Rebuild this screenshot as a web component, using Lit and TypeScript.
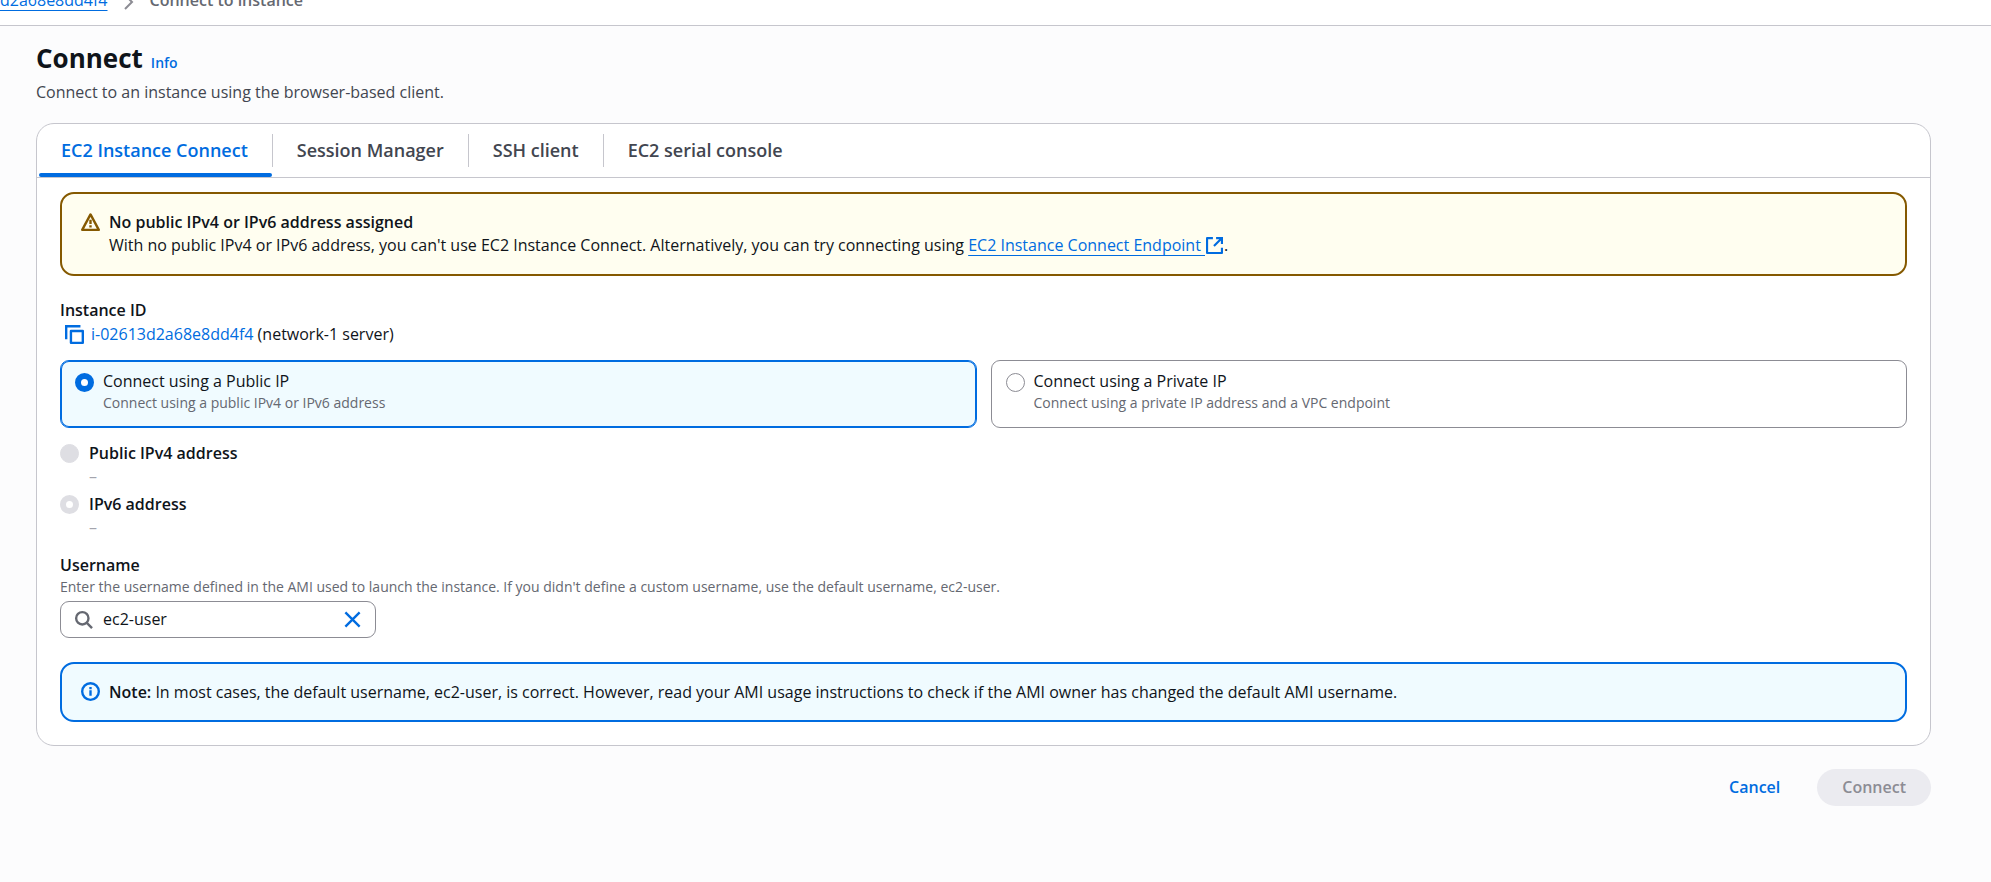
import { LitElement, html, css, svg } from "lit";
import { customElement, state } from "lit/decorators.js";
import { classMap } from "lit/directives/class-map.js";

const TABS = ["EC2 Instance Connect", "Session Manager", "SSH client", "EC2 serial console"];

const ICONS = {
  chevron: svg`<path d="M4 1l7 7-7 7" />`,
  warning: svg`<path d="M8 1.2 15 14.2H1z" stroke-linejoin="round" /><path d="M8 5.6v3.6M8 10.4v1.9" />`,
  info: svg`<circle cx="8" cy="8" r="7" /><path d="M8 11.6V7M8 6V4.2" />`,
  copy: svg`<path d="M1 12V1h12" /><path d="M5 5h10v10H5z" stroke-linejoin="round" />`,
  external: svg`<path d="M6.5 1H1v14h14V10" stroke-linejoin="round" /><path d="M9.5 1H15v5.5M15 1 7.5 8.5" />`,
  search: svg`<circle cx="7" cy="7" r="5.2" /><path d="m11 11 4.2 4.2" />`,
  close: svg`<path d="m2 2 12 12M14 2 2 14" />`,
};

const icon = (name: keyof typeof ICONS) =>
  html`<svg class="icon icon-${name}" viewBox="0 0 16 16" aria-hidden="true">${ICONS[name]}</svg>`;

@customElement("app-root")
export class AppRoot extends LitElement {
  @state() private tab = 0;
  @state() private ipMode = "public";
  @state() private username = "ec2-user";

  static styles = css`
    :host {
      display: block;
      min-height: 100vh;
      background: #fcfcfd;
      color: #0f141a;
      font: 16px/23px "Open Sans", "Noto Sans", sans-serif;
    }
    * { box-sizing: border-box; }
    button, input { font: inherit; color: inherit; margin: 0; }
    button { border: 0; background: none; padding: 0; cursor: pointer; }
    a { color: #006ce0; }
    h1, p { margin: 0; }
    strong { font-weight: 600; }
    .icon {
      width: 19px;
      height: 19px;
      fill: none;
      stroke: currentColor;
      stroke-width: 2;
      flex: none;
    }
    .header {
      height: 26px;
      overflow: hidden;
      display: flex;
      align-items: flex-end;
      background: #fff;
      border-bottom: 1px solid #c6c6cd;
    }
    .crumbs {
      display: flex;
      align-items: center;
      gap: 13px;
      padding-bottom: 13px;
      color: #656871;
    }
    .crumbs a { text-decoration: underline; text-underline-offset: 4px; }
    .crumbs .icon { width: 16px; height: 16px; color: #8c8c94; margin-top: 2px; }
    main { padding: 15px 60px 24px 36px; }
    .title { display: flex; align-items: baseline; gap: 8px; }
    h1 { font-size: 26px; line-height: 34px; font-weight: 700; }
    .info { font-size: 14px; font-weight: 600; text-decoration: none; }
    .lead { margin-top: 6px; color: #424650; }
    .card {
      margin-top: 19px;
      background: #fff;
      border: 1px solid #c6c6cd;
      border-radius: 18px;
    }
    .tabs {
      display: flex;
      padding: 0 2px;
      border-bottom: 1px solid #c6c6cd;
    }
    .tab {
      display: flex;
      flex-direction: column;
      font-size: 18px;
      font-weight: 600;
      color: #424650;
    }
    .tab-label {
      margin: 10px 0 6px;
      padding: 5px 24px;
      border-right: 1px solid #c6c6cd;
    }
    .tab:first-child .tab-label { padding-left: 22px; }
    .tab:last-child .tab-label { border-right: 0; }
    .tab-bar { align-self: stretch; height: 4px; margin-right: 1px; border-radius: 2px; }
    .tab.active { color: #006ce0; }
    .tab.active .tab-bar { background: #006ce0; }
    .panel { padding: 14px 23px 23px; }
    .alert {
      display: flex;
      gap: 9px;
      padding: 17px 19px;
      border: 2px solid;
      border-radius: 14px;
    }
    .alert .icon { margin-top: 2px; }
    .alert p { color: #0f141a; }
    .alert.warning { border-color: #855900; background: #fffef0; color: #855900; }
    .alert.note { border-color: #006ce0; background: #f0fbff; color: #006ce0; line-height: 22px; }
    .alert.note .icon { margin-top: 1px; }
    .alert a { text-underline-offset: 4px; }
    .alert .icon-external { width: 17px; height: 17px; margin: 0 1px; vertical-align: -3px; }
    .label { font-weight: 600; }
    .instance { margin-top: 23px; }
    .instance-row { display: flex; align-items: center; gap: 7px; padding-left: 5px; line-height: 25px; }
    .instance-row button { display: flex; color: #006ce0; }
    .instance-row a { text-decoration: none; }
    .tiles { display: grid; grid-template-columns: 1fr 1fr; gap: 14px; margin-top: 13px; }
    .tile {
      display: flex;
      gap: 9px;
      padding: 9px 14px 14px;
      border: 1px solid #8c8c94;
      border-radius: 9px;
      cursor: pointer;
    }
    .tile.selected {
      border-color: #006ce0;
      background: #f0fbff;
      box-shadow: inset 0 0 0 1px #006ce0;
    }
    .choice-text { display: flex; flex-direction: column; }
    .hint { font-size: 14px; line-height: 20px; color: #656871; }
    input[type="radio"] {
      appearance: none;
      flex: none;
      width: 19px;
      height: 19px;
      margin: 3px 0 0;
      border: 1px solid #8c8c94;
      border-radius: 50%;
      background: #fff;
    }
    input[type="radio"]:checked { border: 6px solid #006ce0; }
    input[type="radio"]:disabled { border-color: #dedee3; margin-top: 2px; }
    input[type="radio"]:disabled:not(:checked) { background: #dedee3; }
    .addresses { display: flex; flex-direction: column; gap: 5px; margin-top: 14px; }
    .address { display: flex; gap: 10px; }
    .empty { color: #a4a4ad; }
    .username { margin-top: 15px; display: flex; flex-direction: column; align-items: flex-start; }
    .field {
      display: flex;
      align-items: center;
      gap: 10px;
      width: 316px;
      max-width: 100%;
      height: 37px;
      margin-top: 4px;
      padding: 0 13px;
      border: 1px solid #8c8c94;
      border-radius: 9px;
      background: #fff;
    }
    .field input { flex: 1; min-width: 0; border: 0; padding: 0; outline: 0; background: none; }
    .field button { display: flex; color: #006ce0; }
    .field .icon-search { color: #656871; }
    .note { margin-top: 24px; }
    .actions { display: flex; justify-content: flex-end; gap: 12px; margin-top: 23px; }
    .action {
      height: 37px;
      padding: 0 25px;
      border-radius: 19px;
      font-weight: 600;
      color: #006ce0;
    }
    .action:disabled { background: #ebebf0; color: #8c8c94; cursor: default; }
  `;

  private tile(value: string, label: string, hint: string) {
    const selected = this.ipMode === value;
    return html`
      <label class=${classMap({ tile: true, selected })}>
        <input type="radio" name="ip-mode" .checked=${selected} @change=${() => (this.ipMode = value)} />
        <span class="choice-text">
          <span>${label}</span>
          <span class="hint">${hint}</span>
        </span>
      </label>
    `;
  }

  private address(label: string, checked: boolean) {
    return html`
      <label class="address">
        <input type="radio" name="address" disabled .checked=${checked} />
        <span class="choice-text">
          <span class="label">${label}</span>
          <span class="empty">–</span>
        </span>
      </label>
    `;
  }

  render() {
    return html`
      <header class="header">
        <nav class="crumbs" aria-label="Breadcrumbs">
          <a href="#instance">d2a68e8dd4f4</a>
          ${icon("chevron")}
          <strong>Connect to instance</strong>
        </nav>
      </header>
      <main>
        <div class="title">
          <h1>Connect</h1>
          <a class="info" href="#info">Info</a>
        </div>
        <p class="lead">Connect to an instance using the browser-based client.</p>

        <section class="card">
          <div class="tabs" role="tablist">
            ${TABS.map(
              (name, i) => html`
                <button
                  class=${classMap({ tab: true, active: this.tab === i })}
                  role="tab"
                  aria-selected=${this.tab === i}
                  @click=${() => (this.tab = i)}
                >
                  <span class="tab-label">${name}</span>
                  <span class="tab-bar"></span>
                </button>
              `,
            )}
          </div>
          <div class="panel" role="tabpanel">
            <div class="alert warning">
              ${icon("warning")}
              <div>
                <p class="label">No public IPv4 or IPv6 address assigned</p>
                <p>
                  With no public IPv4 or IPv6 address, you can't use EC2 Instance Connect. Alternatively, you can try
                  connecting using <a href="#endpoint">EC2 Instance Connect Endpoint ${icon("external")}</a>.
                </p>
              </div>
            </div>

            <div class="instance">
              <div class="label">Instance ID</div>
              <div class="instance-row">
                <button aria-label="Copy instance ID">${icon("copy")}</button>
                <span><a href="#instance">i-02613d2a68e8dd4f4</a> (network-1 server)</span>
              </div>
            </div>

            <div class="tiles">
              ${this.tile("public", "Connect using a Public IP", "Connect using a public IPv4 or IPv6 address")}
              ${this.tile("private", "Connect using a Private IP", "Connect using a private IP address and a VPC endpoint")}
            </div>

            <div class="addresses">
              ${this.address("Public IPv4 address", false)} ${this.address("IPv6 address", true)}
            </div>

            <div class="username">
              <label class="label" for="username">Username</label>
              <span class="hint" id="username-hint"
                >Enter the username defined in the AMI used to launch the instance. If you didn't define a custom
                username, use the default username, ec2-user.</span
              >
              <div class="field">
                ${icon("search")}
                <input
                  id="username"
                  type="text"
                  aria-describedby="username-hint"
                  .value=${this.username}
                  @input=${(e: Event) => (this.username = (e.target as HTMLInputElement).value)}
                />
                <button aria-label="Clear username" @click=${() => (this.username = "")}>${icon("close")}</button>
              </div>
            </div>

            <div class="alert note">
              ${icon("info")}
              <p>
                <strong>Note:</strong> In most cases, the default username, ec2-user, is correct. However, read your AMI
                usage instructions to check if the AMI owner has changed the default AMI username.
              </p>
            </div>
          </div>
        </section>

        <div class="actions">
          <button class="action">Cancel</button>
          <button class="action" disabled>Connect</button>
        </div>
      </main>
    `;
  }
}
